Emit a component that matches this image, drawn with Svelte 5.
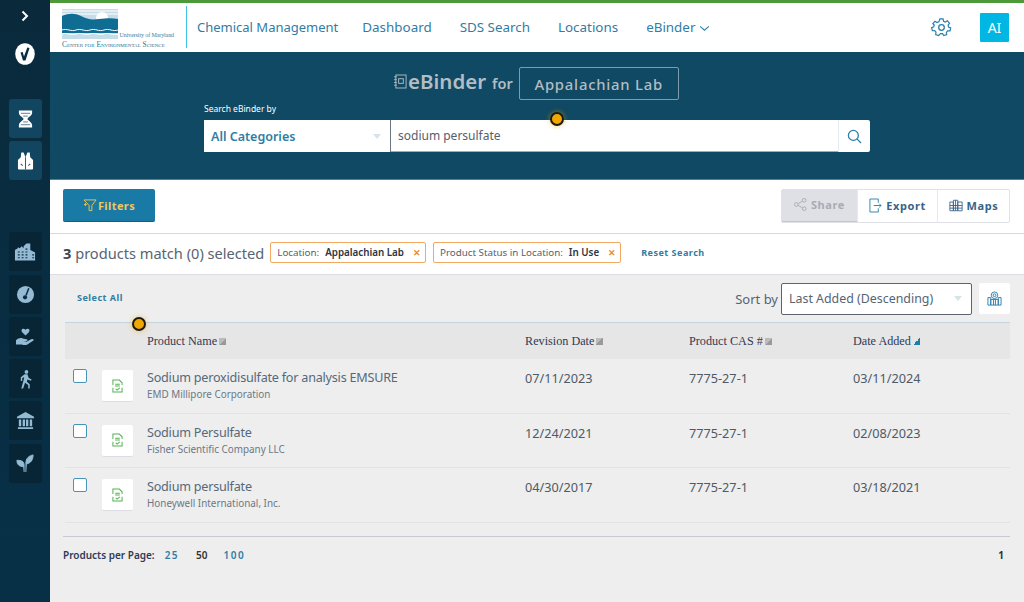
<script>
  const nav = ['Dashboard', 'SDS Search', 'Locations'];
  const rows = [
    { name: 'Sodium peroxidisulfate for analysis EMSURE', maker: 'EMD Millipore Corporation', rev: '07/11/2023', cas: '7775-27-1', added: '03/11/2024' },
    { name: 'Sodium Persulfate', maker: 'Fisher Scientific Company LLC', rev: '12/24/2021', cas: '7775-27-1', added: '02/08/2023' },
    { name: 'Sodium persulfate', maker: 'Honeywell International, Inc.', rev: '04/30/2017', cas: '7775-27-1', added: '03/18/2021' }
  ];
</script>

<div class="app">
  <aside class="side">
    <svg class="chev" viewBox="0 0 10 12" width="10" height="12"><path d="M2.500 1.500 7 6l-4.500 4.500" fill="none" stroke="#fff" stroke-width="2"/></svg>
    <div class="check"><svg viewBox="0 0 20 22" width="20" height="22"><ellipse cx="10" cy="11" rx="9.800" ry="10.800" fill="#fff"/><path d="M5.500 9.500l2.200-.6 1.300 4.600L12.300 4.500l2.200.5-4 12.500H8z" fill="#0b2c40"/></svg></div>
    <div class="sgroup first">
      <div class="sbtn light"><svg viewBox="0 0 18 20" width="17" height="20"><path d="M2 1h14v2.500c0 3-4 4.500-5 6.500 1 2 5 3.500 5 6.500V19H2v-2.500C2 13.500 6 12 7 10 6 8 2 6.500 2 3.500z" fill="#fff"/><path d="M4 4h10M6.500 7h5M6.500 13h5M4 16h10" stroke="#7f9cae" stroke-width="1.300"/></svg></div>
      <div class="sbtn light"><svg viewBox="0 0 18 20" width="17" height="20"><path d="M4.500 1h2.500l2 5 2-5h2.500l.5 5 3 3v9a1 1 0 0 1-1 1H2a1 1 0 0 1-1-1V9l3-3z" fill="#fff"/><path d="M9 6v13M4 13l2 2M14 13l-2 2" stroke="#2d5f7c" stroke-width="1.100"/></svg></div>
    </div>
    <div class="sgroup last">
      <div class="sbtn"><svg viewBox="0 0 24 20" width="23" height="20"><path d="M1 19V8l3-2v-1l2 1 2-2 2 2V4l3-3h4v7l4 2a1 1 0 0 1 1 1v8z" fill="#94bbd3"/><path d="M4 10h2M4 13h2M4 16h2M8 10h2M8 13h2M8 16h2M12 7h2M12 10h2M12 13h2M12 16h2M19 13h2M19 16h2" stroke="#0a2b40" stroke-width="1.300"/></svg></div>
      <div class="sbtn"><svg viewBox="0 0 20 20" width="19" height="19"><circle cx="10" cy="10" r="9" fill="#94bbd3"/><path d="M13.500 3.500 10.500 11" stroke="#0a2b40" stroke-width="1.600"/><circle cx="9.500" cy="13" r="2.200" fill="#0a2b40"/></svg></div>
      <div class="sbtn"><svg viewBox="0 0 22 20" width="21" height="19"><path d="M11 9 7.500 5.500C5.500 3 8.500.5 11 3c2.500-2.500 5.500 0 3.500 2.500z" fill="#94bbd3"/><path d="M1 14c2-2 5-3 7-2l4 1c2 .5 1 2-1 2H9l3 .5 5-2.500c2-1 3.500.5 2 1.500l-6 4c-2 1-4 .5-6 0H1z" fill="#94bbd3"/></svg></div>
      <div class="sbtn"><svg viewBox="0 0 16 20" width="15" height="20"><circle cx="9" cy="2.500" r="2" fill="#94bbd3"/><path d="M7 5h3l1.500 4 3 1.500-.7 1.300L10 10.500 9.500 13l3 2.500V20h-1.600v-3.500L7.500 14l-2 6H3.500L6 11 6.500 8 4.500 9v3H3V8z" fill="#94bbd3"/></svg></div>
      <div class="sbtn"><svg viewBox="0 0 20 20" width="19" height="19"><path d="M10 1 19 6v1.500H1V6z" fill="#94bbd3"/><path d="M3 9h2.500v7H3zM7 9h2.500v7H7zM10.500 9H13v7h-2.500zM14.500 9H17v7h-2.500zM2 17h16v2H2z" fill="#94bbd3"/></svg></div>
      <div class="sbtn"><svg viewBox="0 0 20 22" width="18" height="20"><path d="M9 21V13C9 9 6 8 1 8c0 5 3 7 7 7M11 21V11c0-5 3-8 8-9 0 6-3 9-7 10" fill="#94bbd3" stroke="#94bbd3" stroke-width="1"/></svg></div>
    </div>
  </aside>

  <div class="main">
    <header class="head">
      <div class="logo">
        <svg viewBox="0 0 56 30" width="56" height="30" class="mark">
          <rect width="56" height="30" fill="#c5dde8"/>
          <path d="M0 2h56M0 5h56" stroke="#fff" stroke-width="1"/>
          <circle cx="40" cy="9" r="6" fill="#fff"/>
          <path d="M0 7c7-3 13-3 19 0s10 4 18 3 14-1 19 0v14H0z" fill="#0f6c92"/>
          <path d="M0 21c5-2 9 2 14 0s9 2 14 0 9 2 14 0 9 2 14 0M0 25c5-2 9 2 14 0s9 2 14 0 9 2 14 0 9 2 14 0" fill="none" stroke="#fff" stroke-width="1"/>
        </svg>
        <div class="umd">University of Maryland</div>
        <div class="ces">Center for Environmental Science</div>
      </div>
      <nav>
        <a class="lead" href="#a">Chemical Management</a>
        {#each nav as n}<a href="#a">{n}</a>{/each}
        <a href="#a">eBinder <svg viewBox="0 0 12 8" width="11" height="7"><path d="M1 1.500 6 6l5-4.500" fill="none" stroke="#2f7da5" stroke-width="1.200"/></svg></a>
      </nav>
      <svg class="gear" viewBox="0 0 24 24" width="21" height="21" fill="none" stroke="#2a7fae" stroke-width="1.500"><circle cx="12" cy="12" r="3.200"/><path d="M10 2h4l.6 3 2.300 1 2.600-1.600 2.700 3-1.800 2.500.6 2.400 2.700 1-.9 3.900-3-.1-1.600 1.900.4 3-3.700 1.200-1.600-2.600h-2.400L8.300 23 4.600 21.800l.4-3-1.600-1.900-3 .1-.9-3.900 2.700-1 .6-2.400L1 8.100l2.700-3L6.300 6.700l2.300-1z" transform="translate(1.200 .4) scale(.9)"/></svg>
      <div class="ai">AI</div>
    </header>

    <section class="hero">
      <div class="title">
        <svg viewBox="0 0 14 16" width="13" height="15" fill="none" stroke="#b3bdc4" stroke-width="1"><rect x="2" y="1" width="11" height="14"/><rect x="5" y="5" width="5" height="5"/><path d="M0 3h3M0 6h3M0 9h3M0 12h3"/></svg>
        <span class="eb">eBinder</span><span class="for">for</span><span class="lab">Appalachian Lab</span>
      </div>
      <div class="search-label">Search eBinder by</div>
      <div class="search">
        <div class="cat">All Categories <svg viewBox="0 0 8 5" width="8" height="5"><path d="M0 0h8L4 5z" fill="#d5e3ea"/></svg></div>
        <div class="q">sodium persulfate</div>
        <div class="go"><svg viewBox="0 0 16 16" width="15" height="15" fill="none" stroke="#2a7fae" stroke-width="1.400"><circle cx="6.800" cy="6.800" r="5.300"/><path d="m10.800 10.800 4.200 4.200"/></svg></div>
      </div>
    </section>

    <section class="tools">
      <button class="filters"><svg viewBox="0 0 16 14" width="15" height="13" fill="none" stroke="#f0c75a" stroke-width="1"><path d="M1 1h13L9.500 7v5.500h-3V7zM1 6h3M2.500 4.500v3"/></svg>Filters</button>
      <div class="actions">
        <div class="act off"><svg viewBox="0 0 14 14" width="13" height="13" fill="none" stroke="#a9abb3"><circle cx="2.500" cy="7" r="2"/><circle cx="11" cy="2.500" r="2"/><circle cx="11" cy="11.500" r="2"/><path d="m4.500 6 4.600-2.600M4.500 8l4.600 2.600"/></svg>Share</div>
        <div class="act exp"><svg viewBox="0 0 14 16" width="13" height="15" fill="none" stroke="#2a7fae"><path d="M10 5V1H1v14h9v-4M5 8h8M11 6l2 2-2 2"/></svg>Export</div>
        <div class="act map"><svg viewBox="0 0 16 14" width="14" height="13" fill="none" stroke="#37648a"><path d="M1 3h4v10H1zM5 1h5v12H5zM10 3h5v10h-5zM1 7h14M1 10h14M7.500 1v12"/></svg>Maps</div>
      </div>
    </section>

    <section class="summary">
      <div class="count"><b>3</b> products match (0) selected</div>
      <div class="chip">Location:<b>Appalachian Lab</b><i>✕</i></div>
      <div class="chip">Product Status in Location:<b>In Use</b><i>✕</i></div>
      <a class="reset" href="#a">Reset Search</a>
    </section>

    <section class="content">
      <div class="listbar">
        <a class="selall" href="#a">Select All</a>
        <div class="sort">
          <span>Sort by</span>
          <div class="sel">Last Added (Descending)<svg viewBox="0 0 8 5" width="8" height="5"><path d="M0 0h8L4 5z" fill="#d5e3ea"/></svg></div>
          <div class="mapbtn"><svg viewBox="0 0 16 16" width="15" height="15" fill="none" stroke="#2a7fae"><path d="M1 7h3v8H1zM12 7h3v8h-3zM4 9h8v6H4zM7 9v6M9 9v6"/><circle cx="8" cy="4.500" r="3.500"/><circle cx="8" cy="4.500" r="1.500"/></svg></div>
        </div>
      </div>
      <div class="thead">
        <span>Product Name<em class="srt"></em></span>
        <span>Revision Date<em class="srt"></em></span>
        <span>Product CAS #<em class="srt"></em></span>
        <span>Date Added<em class="srt on"></em></span>
      </div>
      {#each rows as r}
        <div class="row">
          <div class="pick">
            <div class="box"></div>
            <div class="doc"><svg viewBox="0 0 12 15" width="11" height="14" fill="none" stroke="#54b254" stroke-width="1.100"><path d="M1 6.500V1h7l3 3v2.500M11 9.500V14H1V9.500M3.500 5.500h5M3.500 7.500h5"/><path d="m4 10.500 1.500 1.500L8.500 9.500"/></svg></div>
          </div>
          <div class="info"><div class="nm">{r.name}</div><div class="mk">{r.maker}</div></div>
          <div class="cell">{r.rev}</div>
          <div class="cell">{r.cas}</div>
          <div class="cell">{r.added}</div>
        </div>
      {/each}
      <footer class="pager">
        <span class="pp">Products per Page:</span>
        <a href="#a">25</a><span class="cur">50</span><a href="#a">100</a>
        <span class="pg">1</span>
      </footer>
    </section>
  </div>

  <div class="dot d1"></div>
  <div class="dot d2"></div>
</div>

<style>
  :global(body) { margin: 0; background: #eee; }
  .app { position: relative; display: flex; width: 1024px; height: 602px; overflow: hidden; font-family: "Noto Sans", sans-serif; color: #4a5a68; }
  a { text-decoration: none; }

  .side { width: 50px; flex: none; display: flex; flex-direction: column; align-items: center; background: linear-gradient(#0a2a3c, #073047); padding-top: 10px; box-sizing: border-box; }
  .chev { display: block; margin-bottom: 21px; }
  .check { height: 22px; margin-bottom: 34px; }
  .sbtn { width: 33px; height: 39px; border-radius: 3px; background: #082536; display: flex; align-items: center; justify-content: center; }
  .sbtn.light { background: #124560; }
  .sgroup { display: flex; flex-direction: column; gap: 3.300px; }
  .sgroup.last { margin-top: 52px; }

  .main { flex: 1; min-width: 0; display: flex; flex-direction: column; }
  .head { height: 52px; box-sizing: border-box; flex: none; background: #fff; border-top: 3px solid #4c9a3a; display: flex; align-items: center; padding: 0 15px 1px 12px; }
  .logo { width: 112px; height: 42px; position: relative; flex: none; }
  .mark { position: absolute; left: 0; top: 3px; }
  .umd { position: absolute; right: 0; top: 26px; font: 6px "Liberation Serif", serif; color: #3a7d9c; letter-spacing: -.1px; }
  .ces { position: absolute; left: 0; top: 33.500px; font: 7.350px "Liberation Serif", serif; color: #26708f; white-space: nowrap; font-variant: small-caps; }
  nav { flex: 1; height: 42px; margin-left: 12px; border-left: 1px solid #3fc0e4; padding-left: 10px; display: flex; align-items: center; gap: 28px; font-size: 13.400px; }
  nav a { color: #2f7da5; white-space: nowrap; }
  nav a.lead { margin-right: -4px; font-size: 13px; }
  .gear { margin-right: 28px; }
  .ai { width: 29px; height: 29px; background: #00b7e3; color: #fff; font-size: 14px; display: flex; align-items: center; justify-content: center; border-radius: 1px; }

  .hero { height: 128px; flex: none; box-sizing: border-box; background: #104963; border-bottom: 1px solid #5d7d8e; padding: 15px 0 0 154px; }
  .title { display: flex; align-items: center; margin-left: 190px; height: 33px; color: #b3bdc4; }
  .title svg { margin-top: -5px; }
  .eb { font-size: 20.500px; font-weight: 600; margin: -5px 0 0 1px; }
  .for { font-size: 14.500px; font-weight: 600; margin: -2px 6px 0 6px; }
  .lab { height: 33px; box-sizing: border-box; width: 160px; border: 1px solid #7d9cae; border-radius: 2px; font-size: 14.800px; font-weight: 500; letter-spacing: .8px; display: flex; align-items: center; justify-content: center; }
  .search-label { color: #fff; font-size: 8.500px; margin-top: 2px; height: 14px; line-height: 14px; }
  .search { display: flex; height: 32px; margin-top: 4px; }
  .cat { width: 187px; box-sizing: border-box; background: #fff; padding: 0 9px 0 7px; display: flex; align-items: center; justify-content: space-between; color: #2f7da5; font-weight: 600; font-size: 12.500px; border-right: 1px solid #6a7580; }
  .q { width: 447px; box-sizing: border-box; background: #fff; padding-left: 7px; display: flex; align-items: center; font-size: 12px; color: #55606e; border-bottom: 1px solid #aaa; }
  .go { width: 31px; background: #fff; border-left: 1px solid #e3eef4; border-radius: 0 2px 2px 0; display: flex; align-items: center; justify-content: center; }

  .tools { height: 54px; flex: none; box-sizing: border-box; background: #fff; border-bottom: 1px solid #d8d9e0; display: flex; justify-content: space-between; align-items: flex-start; padding: 9px 14px 0 13px; }
  .filters { width: 92px; height: 33px; background: #187aa5; border: 0; border-bottom: 1px solid #125f82; border-radius: 2px; color: #f0c75a; font: 700 11px "Noto Sans", sans-serif; letter-spacing: .4px; display: flex; align-items: center; justify-content: center; padding: 0; }
  .actions { display: flex; height: 34px; box-sizing: border-box; border: 1px solid #e0e1e6; border-radius: 2px; }
  .act { box-sizing: border-box; display: flex; align-items: center; justify-content: center; gap: 4px; padding-bottom: 2px; font-size: 11px; font-weight: 700; color: #37648a; letter-spacing: .6px; border-left: 1px solid #e8e9ed; }
  .act.off { width: 75px; background: #dfe0e5; color: #a9abb3; border: 0; border-bottom: 1px solid #c5c6cc; }
  .act.exp { width: 80px; }
  .act.map { width: 72px; }

  .summary { height: 41px; flex: none; box-sizing: border-box; background: #fff; border-bottom: 1px solid #dcdde2; display: flex; align-items: center; padding: 0 0 3px 13px; }
  .count { font-size: 14.600px; margin-right: 6px; color: #566472; }
  .count b { color: #3c4550; }
  .chip { height: 21px; box-sizing: border-box; border: 1px solid #f2a860; border-radius: 2px; display: flex; align-items: center; padding: 0 4px 0 6px; font-size: 9.800px; color: #56606c; margin-right: 7px; white-space: nowrap; }
  .chip b { color: #2d3442; margin-left: 6px; font-weight: 600; }
  .chip i { color: #ee8a2a; font-style: normal; font-weight: 700; font-size: 9px; margin-left: 9px; }
  .reset { color: #2f7da5; font-size: 9px; font-weight: 700; letter-spacing: .5px; margin-left: 13px; }

  .content { flex: 1; background: #eee; padding: 0 14px 0 13px; }
  .listbar { height: 47px; display: flex; justify-content: space-between; align-items: center; padding: 0 0 0 14px; }
  .selall { color: #2f7da5; font-size: 9px; font-weight: 700; letter-spacing: .5px; margin-top: -3px; }
  .sort { display: flex; align-items: center; font-size: 13px; color: #566472; }
  .sel { width: 191px; height: 32px; box-sizing: border-box; margin-left: 3px; border: 1px solid #5b6470; border-radius: 2px; background: #fff; padding: 0 9px 0 7px; display: flex; align-items: center; justify-content: space-between; font-size: 12.400px; }
  .mapbtn { width: 31px; height: 31px; margin-left: 7px; background: #fff; border-radius: 2px; display: flex; align-items: center; justify-content: center; }
  .thead { margin-left: 2px; height: 37px; box-sizing: border-box; border-top: 1px solid #c3d4df; background: #e6e6e6; display: grid; grid-template-columns: 378px 164px 164px 1fr; align-items: center; padding-left: 82px; font: 12.200px "Liberation Serif", serif; color: #2e3a55; }
  .thead span { display: flex; align-items: center; white-space: nowrap; }
  .srt { width: 7px; height: 7px; margin-left: 2px; background: linear-gradient(135deg, #bbb 50%, #999 50%); }
  .srt.on { background: linear-gradient(135deg, transparent 50%, #1c7fa6 50%); }
  .row { margin-left: 2px; height: 54.500px; box-sizing: border-box; border-bottom: 1px solid #e2e3e6; display: grid; grid-template-columns: 82px 378px 164px 164px 1fr; }
  .pick { display: flex; gap: 15px; padding-left: 8px; align-items: flex-start; }
  .box { width: 14px; height: 14px; margin-top: 10px; box-sizing: border-box; border: 1px solid #4a93b8; border-radius: 2px; background: #fff; flex: none; }
  .doc { width: 31px; height: 32px; margin-top: 11px; flex: none; box-sizing: border-box; background: #fff; border-bottom: 1px solid #dcdde2; border-radius: 2px; display: flex; align-items: center; justify-content: center; }
  .info { padding-top: 10px; }
  .nm { font-size: 12.600px; letter-spacing: -.22px; line-height: 18px; color: #55697a; white-space: nowrap; }
  .mk { font-size: 9.900px; line-height: 15px; color: #6b7785; white-space: nowrap; }
  .cell { padding-top: 11px; font-size: 12.700px; line-height: 16px; color: #4e5a66; }
  .pager { margin-top: 13px; height: 40px; padding-bottom: 2px; box-sizing: border-box; border-top: 1px solid #c9cad0; display: flex; align-items: center; font-size: 10px; font-weight: 600; }
  .pp { color: #2e3a55; margin-right: 10px; }
  .pager a { color: #2f7da5; letter-spacing: 1.500px; margin-right: 17px; }
  .cur { color: #333; margin-right: 16px; }
  .pg { margin-left: auto; color: #333; font-weight: 700; font-size: 10px; margin-right: 6px; }

  .dot { position: absolute; width: 14px; height: 14px; box-sizing: border-box; border-radius: 50%; background: #f0a800; border: 2px solid #1a1a1a; box-shadow: 0 0 5px rgba(240,168,0,.6); }
  .d1 { left: 550px; top: 112px; }
  .d2 { left: 132px; top: 317px; }
</style>
